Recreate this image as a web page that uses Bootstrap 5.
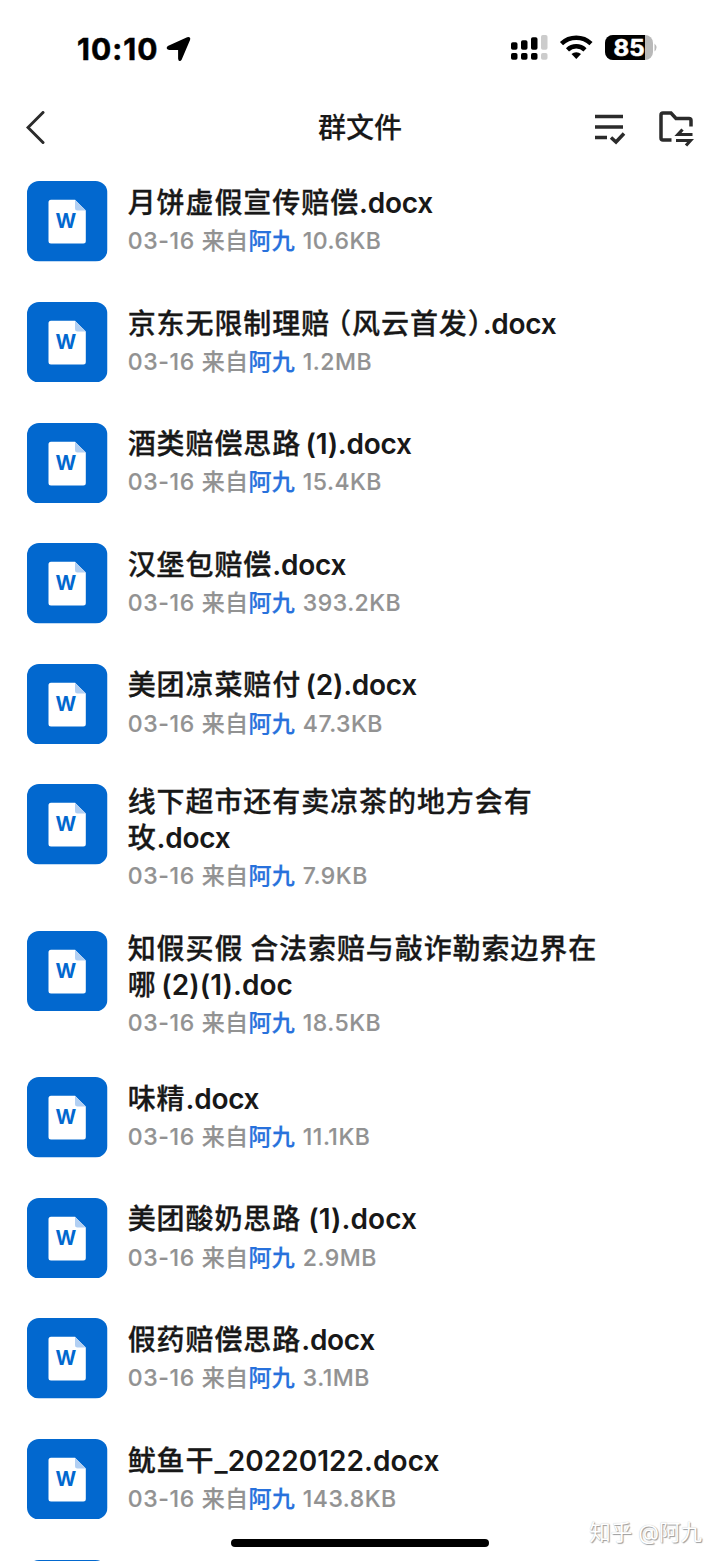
<!DOCTYPE html>
<html lang="zh-CN">
<head>
<meta charset="utf-8">
<meta name="viewport" content="width=device-width, initial-scale=1">
<title>群文件</title>
<link href="https://cdn.jsdelivr.net/npm/bootstrap@5.3.0/dist/css/bootstrap.min.css" rel="stylesheet">
<style>
html,body{height:1561px;overflow:hidden}
body{background:#fff;color:#181818;font-family:Inter,"Noto Sans CJK SC",sans-serif}
.phone{width:720px;height:1561px;overflow:hidden}
.status-bar{height:96px;padding:2px 63px 0 77px}
.clock{font-size:30px;font-weight:700;line-height:34px;color:#000;letter-spacing:1.05px;-webkit-text-stroke:.5px #000}
.location{margin-left:7px}
.title-bar{height:64px;padding:0 26px}
.page-title{font-size:28px;font-weight:500;line-height:40px;-webkit-text-stroke:.15px #181818}
.files{padding:21.4px 27px 0}
.file-row{min-height:80.5px;margin-bottom:40.1px;gap:20.2px}
.file-icon{width:80.5px;height:80.5px}
.file-text{padding-top:4.7px}
.file-text.two-line{padding-top:1px}
.file-name{font-size:28px;font-weight:500;line-height:35.8px;letter-spacing:.92px;-webkit-text-stroke:.3px #181818}
.file-name .lat{letter-spacing:-.27px;font-weight:600;-webkit-text-stroke:0}
.file-name .snug{word-spacing:-2.4px}
.file-name .digits{letter-spacing:.05px}
.file-name .paren{font-feature-settings:"halt"}
.file-name .open{margin-left:7px}
.meta{font-size:23px;line-height:28.4px;padding-top:5.3px;color:#929292;letter-spacing:.4px;font-weight:500;-webkit-text-stroke:.15px #929292}
.meta .lat{letter-spacing:.65px}
.meta .size{letter-spacing:.5px;padding-left:.9px}
.meta .sender{color:#2871dc;-webkit-text-stroke:.25px #2871dc}
.home-bar{left:231px;bottom:14px;width:258px;height:8px;background:#000}
.watermark{right:18px;bottom:14px;font-size:21.5px;line-height:30px;color:#fff;text-shadow:1px 1px 1px #999,0 0 1px #bbb}
</style>
</head>
<body>
<svg class="d-none">
  <symbol id="doc" viewBox="0 0 80.5 80.5">
    <rect width="80.5" height="80.5" rx="12" fill="#0268cf"/>
    <path d="M24 18.700H48L58.800 29.500V60a2.500 2.500 0 0 1-2.500 2.500H24A2.500 2.500 0 0 1 21.500 60V21.200a2.500 2.500 0 0 1 2.500-2.500z" fill="#fff"/>
    <path d="M48 18.700V27a2.500 2.500 0 0 0 2.500 2.500h8.300z" fill="#b1cff3"/>
    <text x="38.900" y="47.300" text-anchor="middle" font-family="Inter,sans-serif" font-size="20" font-weight="700" fill="#0268cf">W</text>
  </symbol>
</svg>
<div class="phone position-relative">
  <header class="status-bar d-flex align-items-center">
    <span class="clock">10:10</span>
    <svg class="location" width="26" height="26" viewBox="0 0 26 26"><path d="M2.200 10.800 21.500 2Q24 1.200 23.200 3.700L15 23Q13.500 25.500 13 22.500V13.200H3.500Q.5 12.500 2.200 10.800z" stroke="#000" stroke-width="1.800" stroke-linejoin="round"/></svg>
    <svg class="ms-auto" width="147" height="30" viewBox="0 0 147 30">
      <g><rect x="1" y="8.300" width="6.500" height="7.500" rx="1.800"/><rect x="11" y="6.300" width="6.500" height="9.500" rx="1.800"/><rect x="21" y="3.300" width="6.500" height="12.500" rx="1.800"/><rect x="1" y="19" width="6.500" height="6.800" rx="1.800"/><rect x="11" y="19" width="6.500" height="6.800" rx="1.800"/><rect x="21" y="19" width="6.500" height="6.800" rx="1.800"/></g>
      <g fill="#ccc"><rect x="31" y="1" width="6.500" height="14.800" rx="1.800"/><rect x="31" y="19" width="6.500" height="6.800" rx="1.800"/></g>
      <g fill="none" stroke="#000" stroke-width="4.500"><path d="M51.500 9.700a21.500 21.500 0 0 1 29.500 0"/><path d="M57.500 15.800a12.800 12.800 0 0 1 17.500 0"/></g>
      <path d="M61.500 20a7 7 0 0 1 9.500 0L66.300 25z"/>
      <clipPath id="full"><rect x="95" width="40" height="30"/></clipPath>
      <rect x="95" y="1" width="48" height="25" rx="8" fill="#b9b9b9"/>
      <rect x="95" y="1" width="48" height="25" rx="8" clip-path="url(#full)"/>
      <path d="M144.500 9.500q4 4 0 8z" fill="#b9b9b9"/>
      <text x="103.500" y="21.600" font-family="Inter,sans-serif" font-size="22.500" font-weight="700" fill="#fff" stroke="#fff" stroke-width=".6" textLength="31" lengthAdjust="spacingAndGlyphs">85</text>
    </svg>
  </header>
  <nav class="title-bar d-flex align-items-center justify-content-between position-relative">
    <svg width="20" height="34" viewBox="0 0 20 34" fill="none" stroke="#2b2b2b" stroke-width="3"><path d="M17 1.500 2 16.500 17 31.500" stroke-linecap="round"/></svg>
    <h1 class="page-title m-0 position-absolute start-50 translate-middle-x">群文件</h1>
    <svg width="102" height="40" viewBox="0 0 102 40" fill="none" stroke="#2b2b2b" stroke-width="3.500">
      <path d="M3 8.500H31M3 19H31M3 29.500H15M19 29.500 24 34 32 25.500"/>
      <path d="M79.500 32H71Q69 32 69 30V7Q69 5 71 5H79L84 10.500H97Q99 10.500 99 12.500V18.500"/>
      <path d="M100.500 26.500H86L90.500 21.500M84 32.500H98.500L94 37.500" stroke-width="3.200"/>
    </svg>
  </nav>
  <main class="files" id="files"></main>
  <div class="home-bar position-absolute rounded-pill"></div>
  <div class="watermark position-absolute">知乎 @阿九</div>
</div>
<script>
const files = [
  [['月饼虚假宣传赔偿.docx'], '10.6KB'],
  [['京东无限制理赔（风云首发）.docx'], '1.2MB'],
  [['酒类赔偿思路 (1).docx'], '15.4KB', 'snug'],
  [['汉堡包赔偿.docx'], '393.2KB'],
  [['美团凉菜赔付 (2).docx'], '47.3KB', 'snug'],
  [['线下超市还有卖凉茶的地方会有', '玫.docx'], '7.9KB'],
  [['知假买假 合法索赔与敲诈勒索边界在', '哪 (2)(1).doc'], '18.5KB', 'snug digits'],
  [['味精.docx'], '11.1KB'],
  [['美团酸奶思路 (1).docx'], '2.9MB', 'digits'],
  [['假药赔偿思路.docx'], '3.1MB'],
  [['鱿鱼干_20220122.docx'], '143.8KB', 'digits'],
  [[''], '']
];
const markUp = (s, cls) => s
  .replace(/[\x20-\x7e]+/g, m => `<span class="lat ${m === ' ' ? '' : cls}">${m}</span>`)
  .replace('（', '<span class="paren open">（</span>')
  .replace('）', '<span class="paren">）</span>');
document.getElementById('files').innerHTML = files.map(([lines, size, cls = '']) => `
  <div class="file-row d-flex align-items-start">
    <svg class="file-icon flex-shrink-0"><use href="#doc"/></svg>
    ${size ? `<div class="file-text text-nowrap ${lines.length > 1 ? 'two-line' : ''}">
      <div class="file-name">${lines.map(l => markUp(l, cls)).join('<br>')}</div>
      <div class="meta"><span class="lat">03-16 </span>来自<span class="sender">阿九</span><span class="lat size"> ${size}</span></div>
    </div>` : ''}
  </div>`).join('');
</script>
<script src="https://cdn.jsdelivr.net/npm/bootstrap@5.3.0/dist/js/bootstrap.bundle.min.js"></script>
</body>
</html>
